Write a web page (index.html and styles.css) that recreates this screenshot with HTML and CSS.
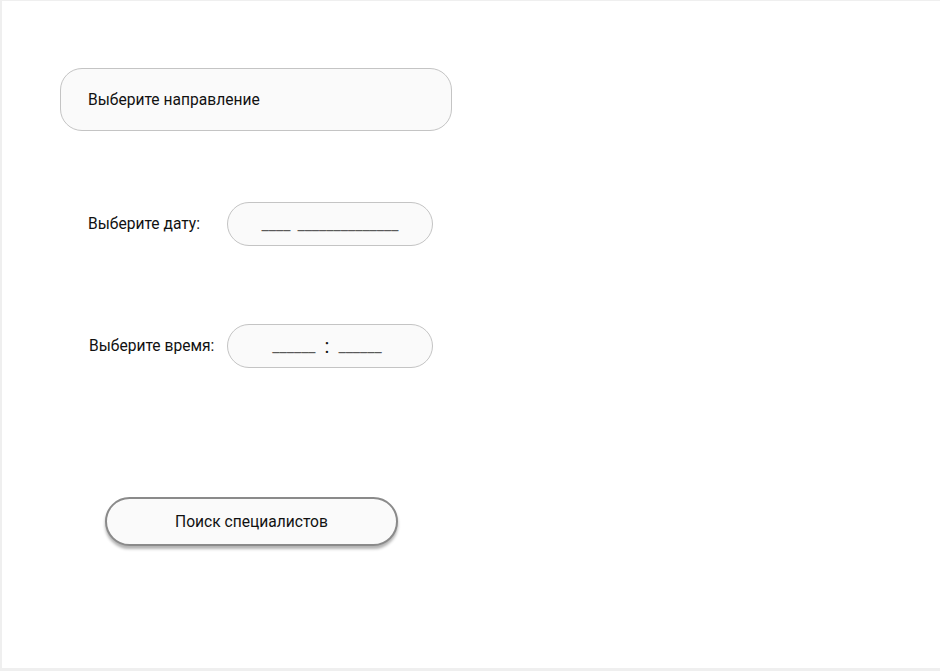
FILE: index.html
```html
<!DOCTYPE html>
<html lang="ru">
<head>
<meta charset="utf-8">
<title>Поиск специалистов</title>
<link rel="stylesheet" href="styles.css">
</head>
<body>
<main class="panel">
  <div class="select-box">Выберите направление</div>
  <div class="row row-date">
    <span class="label">Выберите дату:</span>
    <div class="pill"><span class="blank">____</span> <span class="blank">______________</span></div>
  </div>
  <div class="row row-time">
    <span class="label">Выберите время:</span>
    <div class="pill pill-time"><span class="blank">______</span> <span class="colon">:</span> <span class="blank">______</span></div>
  </div>
  <button class="search-btn">Поиск специалистов</button>
</main>
</body>
</html>
```
FILE: styles.css
```css
html, body {
  margin: 0;
  padding: 0;
}
body {
  background: #efefef;
  font-family: Roboto, "Noto Sans", sans-serif;
  color: #111;
  width: 940px;
  height: 671px;
  overflow: hidden;
}
.panel {
  box-sizing: border-box;
  margin: 1px 0 0 2px;
  width: 938px;
  height: 667px;
  background: #fff;
  display: flex;
  flex-direction: column;
  align-items: flex-start;
  padding: 67px 0 0 58px;
}
.select-box {
  box-sizing: border-box;
  width: 392px;
  height: 63px;
  border: 1px solid #c4c4c4;
  border-radius: 22px;
  background: #fafafa;
  font-size: 15.6px;
  display: flex;
  align-items: center;
  padding-left: 27px;
}
.row {
  display: flex;
  align-items: center;
  margin-left: 28px;
}
.row-date { margin-top: 71px; }
.row-time { margin-top: 78px; }
.label {
  font-size: 15.6px;
  width: 139px;
}
.row-time .label { margin-left: 1px; width: 138px; }
.pill {
  box-sizing: border-box;
  width: 206px;
  height: 44px;
  border: 1px solid #c4c4c4;
  border-radius: 22px;
  background: #fafafa;
  display: flex;
  align-items: center;
  justify-content: center;
  gap: 7px;
  font-size: 16px;
  color: #5a5a5a;
}
.pill-time { gap: 9px; padding-right: 6px; }
.colon { color: #111; font-size: 20px; }
.search-btn {
  margin: 129px 0 0 45px;
  box-sizing: border-box;
  width: 293px;
  height: 49px;
  border: 2px solid #8a8a8a;
  border-radius: 25px;
  background: #fafafa;
  box-shadow: 0 3px 3px rgba(0,0,0,0.3);
  font-family: Roboto, "Noto Sans", sans-serif;
  font-size: 15.6px;
  color: #111;
  padding: 0;
}
```
